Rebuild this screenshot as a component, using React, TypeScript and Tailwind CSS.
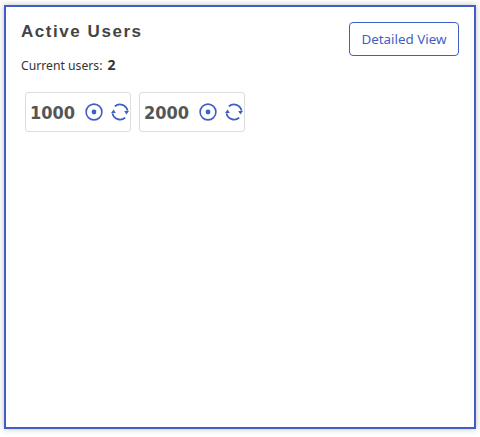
function TargetIcon() {
  return (
    <svg width="18" height="18" viewBox="0 0 18 18" fill="none" className="text-[#3f5fc4]">
      <circle cx="9" cy="9" r="7.9" stroke="currentColor" strokeWidth="1.6" />
      <circle cx="9" cy="9" r="2.4" fill="currentColor" />
    </svg>
  );
}

function SyncIcon() {
  return (
    <svg width="18" height="18" viewBox="0 0 18 18" fill="none" className="text-[#3f5fc4]">
      <path d="M3.8 3.4A7.7 7.7 0 0 1 16.5 7.6" stroke="currentColor" strokeWidth="1.8" />
      <path d="M14.2 14.6A7.7 7.7 0 0 1 1.5 10.4" stroke="currentColor" strokeWidth="1.8" />
      <path d="M13.2 8h4.8L15.4 11.4z" fill="currentColor" />
      <path d="M0 10h4.8L2.6 6.6z" fill="currentColor" />
    </svg>
  );
}

function UserCard({ id }: { id: string }) {
  return (
    <div className="flex h-[40px] w-[106px] items-center rounded-[3px] border border-[#dddddd] bg-white pl-1">
      <span className="font-['DejaVu_Sans'] text-[18px] font-bold [font-stretch:condensed] text-[#555555]">{id}</span>
      <span className="ml-[10px] flex items-center gap-[8px]">
        <TargetIcon />
        <SyncIcon />
      </span>
    </div>
  );
}

export default function App() {
  return (
    <div className="h-[437px] w-[480px] bg-white px-1 pt-[5px]">
      <div className="h-[424px] w-[472px] border-2 border-[#3f5fc4] bg-white pl-[15px] pr-[15px] pt-[15px] shadow-[0_0_6px_rgba(0,0,0,0.25)]">
        <div className="flex items-start justify-between">
          <div>
            <h2 className="font-['Liberation_Sans'] text-[17px] font-bold leading-[20px] tracking-[1.55px] text-[#444444]">
              Active Users
            </h2>
            <p className="mt-[13px] font-['Noto_Sans'] text-[12.2px] leading-[20px] text-[#333333]">
              Current users: <span className="ml-[2px] text-[14px] font-bold">2</span>
            </p>
          </div>
          <button className="h-[34px] w-[110px] rounded-[4px] border border-[#3f5fc4] bg-white font-['Noto_Sans'] text-[13.4px] text-[#3f5fc4]">
            Detailed View
          </button>
        </div>
        <div className="ml-[4px] mt-[16px] flex gap-2">
          <UserCard id="1000" />
          <UserCard id="2000" />
        </div>
      </div>
    </div>
  );
}
